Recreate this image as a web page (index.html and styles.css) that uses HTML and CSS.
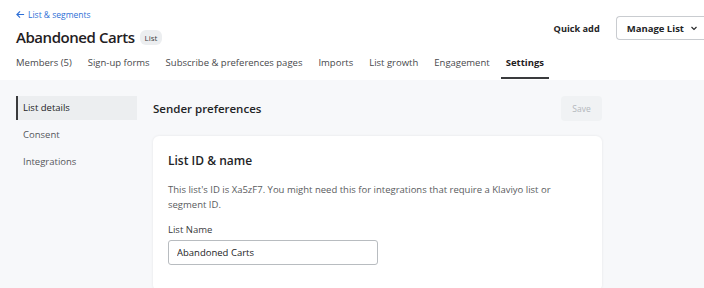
FILE: index.html
```html
<!DOCTYPE html>
<html lang="en">
<head>
    <meta charset="UTF-8">
    <title>Abandoned Carts - Settings</title>
    <link rel="stylesheet" href="styles.css">
</head>
<body>
    <header class="header">
        <div class="header-top">
            <div class="title-block">
                <a href="#" class="back-link">
                    <svg class="back-icon" width="9" height="9" viewBox="0 0 10 10">
                        <path d="M9 5H1.5M4.5 1.5L1 5l3.5 3.5" fill="none" stroke="currentColor" stroke-width="1.3"/>
                    </svg>
                    List &amp; segments
                </a>
                <div class="title-row">
                    <h1 class="title">Abandoned Carts</h1>
                    <span class="badge">List</span>
                </div>
            </div>
            <div class="header-actions">
                <a href="#" class="quick-add">Quick add</a>
                <button class="menu-button">Manage List
                    <svg width="8" height="8" viewBox="0 0 8 8">
                        <path d="M1.5 3l2.5 2.5L6.5 3" fill="none" stroke="currentColor" stroke-width="1.1"/>
                    </svg>
                </button>
            </div>
        </div>
        <nav class="tabs">
            <a href="#" class="tab">Members (5)</a>
            <a href="#" class="tab">Sign-up forms</a>
            <a href="#" class="tab">Subscribe &amp; preferences pages</a>
            <a href="#" class="tab">Imports</a>
            <a href="#" class="tab">List growth</a>
            <a href="#" class="tab">Engagement</a>
            <a href="#" class="tab tab-active">Settings</a>
        </nav>
    </header>

    <div class="page">
        <aside class="sidebar">
            <a href="#" class="side-link side-active">List details</a>
            <a href="#" class="side-link">Consent</a>
            <a href="#" class="side-link">Integrations</a>
        </aside>

        <main class="content">
            <div class="content-head">
                <h2 class="section-title">Sender preferences</h2>
                <button class="save-button" disabled>Save</button>
            </div>

            <div class="card">
                <h3 class="card-title">List ID &amp; name</h3>
                <p class="card-text">This list's ID is Xa5zF7. You might need this for integrations that require a Klaviyo list or segment ID.</p>
                <label class="field-label" for="list-name">List Name</label>
                <input id="list-name" class="input" type="text" value="Abandoned Carts">
            </div>
        </main>
    </div>
</body>
</html>
```

FILE: styles.css
```css
* {
    margin: 0;
    padding: 0;
    box-sizing: border-box;
}
body {
    font-family: "Open Sans", "Noto Sans", sans-serif;
    background-color: #f7f8fa;
    color: #232426;
    font-size: 10px;
}
a {
    text-decoration: none;
    color: inherit;
}

.header {
    background-color: #ffffff;
    padding: 0 0 0 16px;
    height: 80px;
}
.header-top {
    display: flex;
    justify-content: space-between;
}
.title-block {
    padding-top: 8px;
}
.back-link {
    display: flex;
    align-items: center;
    gap: 3px;
    color: #2e6fd6;
    font-size: 8.5px;
    height: 12px;
}
.back-icon {
    margin-top: 1px;
}
.title-row {
    display: flex;
    align-items: center;
    gap: 5px;
    margin-top: 7px;
}
.title {
    font-size: 15px;
    font-weight: 600;
    letter-spacing: -0.45px;
    color: #1f2022;
    line-height: 20px;
}
.badge {
    background-color: #eceef0;
    color: #444;
    font-size: 8px;
    line-height: 11px;
    padding: 2px 5px;
    border-radius: 6px;
}
.header-actions {
    display: flex;
    align-items: center;
    gap: 16px;
    padding-top: 16px;
    height: 40px;
}
.quick-add {
    font-weight: 700;
    font-size: 9.2px;
}
.menu-button {
    display: flex;
    align-items: center;
    gap: 6px;
    font-family: inherit;
    font-weight: 700;
    font-size: 9.5px;
    color: #232426;
    background: #ffffff;
    border: 1px solid #c9ccd0;
    border-radius: 4px 0 0 4px;
    border-right: none;
    height: 24px;
    padding: 0 6px 0 10px;
}

.tabs {
    display: flex;
    gap: 16px;
    margin-top: 8px;
}
.tab {
    color: #48494c;
    font-size: 9.5px;
    line-height: 14px;
    padding: 1px 0 9px;
}
.tab-active {
    font-weight: 700;
    color: #1f2022;
    border-bottom: 2px solid #3a3b3d;
    padding: 1px 5px 7px;
    margin-left: -5px;
}

.page {
    display: flex;
    padding: 16px 0 0 16px;
}
.sidebar {
    width: 121px;
    display: flex;
    flex-direction: column;
    gap: 3px;
}
.side-link {
    color: #55575a;
    font-size: 9.5px;
    padding: 0 7px;
    line-height: 24px;
}
.side-active {
    background-color: #eceef0;
    color: #232426;
    border-left: 2px solid #3a3b3d;
    padding-left: 5px;
}

.content {
    width: 449px;
    margin-left: 16px;
}
.content-head {
    display: flex;
    justify-content: space-between;
    align-items: center;
    height: 25px;
}
.section-title {
    font-size: 11.5px;
    font-weight: 600;
    color: #232426;
}
.save-button {
    font-family: inherit;
    font-size: 8.5px;
    color: #b3b7bc;
    background-color: #f0f2f4;
    border: none;
    border-radius: 4px;
    width: 41px;
    height: 25px;
}

.card {
    background: #ffffff;
    border-radius: 6px;
    box-shadow: 0 0 3px rgba(0, 0, 0, 0.08);
    margin-top: 15px;
    padding: 16px 15px 26px;
}
.card-title {
    font-size: 12px;
    font-weight: 600;
    color: #232426;
    margin-bottom: 13px;
}
.card-text {
    font-size: 9.5px;
    color: #5a5c60;
    line-height: 15px;
    max-width: 395px;
    margin-bottom: 12px;
}
.field-label {
    display: block;
    font-size: 9.5px;
    color: #3a3b3d;
    line-height: 12px;
    margin-bottom: 4px;
}
.input {
    width: 210px;
    height: 25px;
    border: 1px solid #b8bcc0;
    border-radius: 3px;
    padding: 0 8px;
    font-family: inherit;
    font-size: 9.5px;
    color: #232426;
}
```
